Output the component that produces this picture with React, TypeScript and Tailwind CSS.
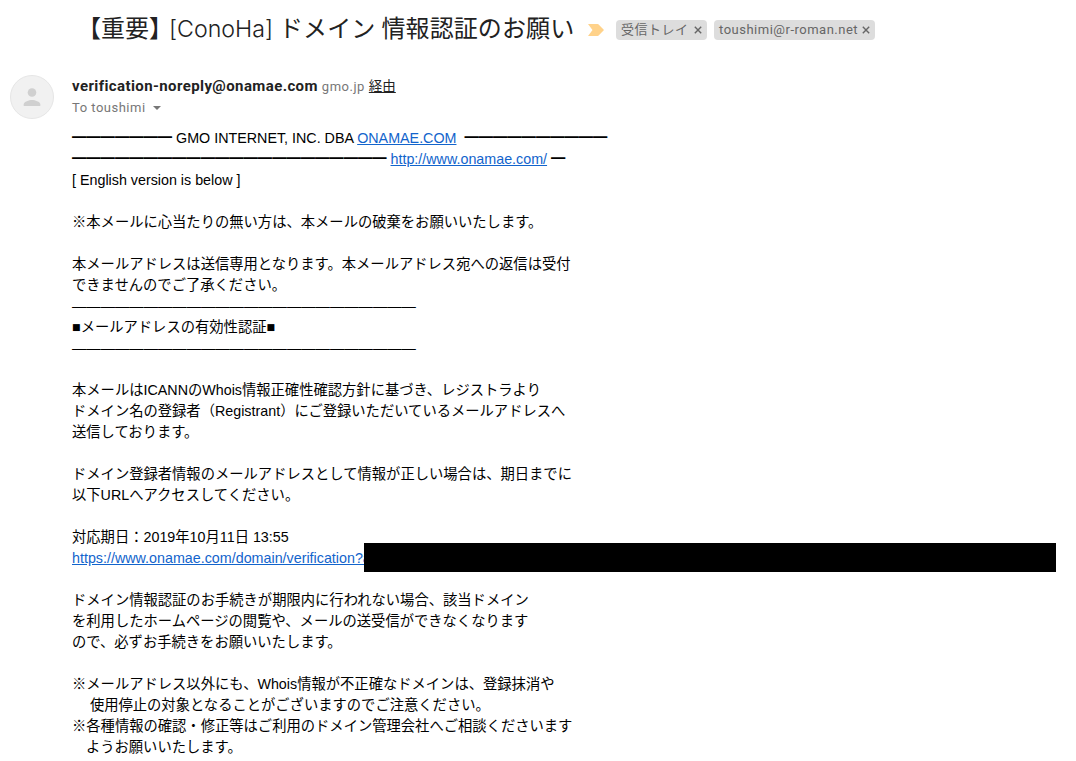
function Chip({ label, w }: { label: string; w: string }) {
  return (
    <span className={`flex h-5 items-center justify-between rounded-[4px] bg-[#dddddd] pl-[5px] pr-[5px] text-[13px] tracking-[0.5px] text-[#666666] ${w}`}>
      <span>{label}</span>
      <svg width="8" height="8" viewBox="0 0 8 8" fill="none" stroke="#666666" strokeWidth="1.4">
        <path d="M.8.8l6.400 6.400M7.200.8L.8 7.200" />
      </svg>
    </span>
  );
}

function Line({ children }: { children?: React.ReactNode }) {
  return <div className="h-[21px] whitespace-pre">{children ?? " "}</div>;
}

function A({ children }: { children: React.ReactNode }) {
  return <a className="text-[#1264cc] underline">{children}</a>;
}

export default function App() {
  return (
    <div className="h-[761px] w-[1076px] overflow-hidden bg-white font-['Roboto','Noto_Sans_CJK_JP',sans-serif]">
      <div className="flex h-[58px] items-center pl-[77px]">
        <h2 className="w-[497px] whitespace-nowrap text-2xl font-normal text-[#222222]">
          【重要】<span className="ml-[-4px] font-['Inter',sans-serif] text-[23.2px] font-light">[ConoHa]</span> <span className="tracking-[0.1px]">ドメイン 情報認証のお願い</span>
        </h2>
        <svg className="ml-[13px] mt-[2px]" width="18" height="14" viewBox="0 0 18 14">
          <path d="M1 1h9.500q1 0 1.600.9L17 7l-4.900 5.100q-.6.900-1.600.900H1l4.500-6z" fill="#ffd28a" />
        </svg>
        <div className="ml-[11px] mt-[2px] flex gap-[7px]">
          <Chip label="受信トレイ" w="w-[91px]" />
          <Chip label="toushimi@r-roman.net" w="w-[161px]" />
        </div>
      </div>
      <div className="flex pl-[10px] pt-[17px]">
        <div className="flex h-[44px] w-[44px] items-center justify-center rounded-full border border-[#e6e6e6] bg-[#f1f1f1]">
          <svg width="20" height="20" viewBox="0 0 20 20" fill="#d0d0d0">
            <circle cx="10" cy="5.500" r="4.300" />
            <path d="M1.700 19v-1.500c0-2.800 5.500-4.500 8.300-4.500s8.300 1.700 8.300 4.500V19z" />
          </svg>
        </div>
        <div className="ml-[18px]">
          <div className="flex h-5 items-baseline">
            <span className="text-[15px] font-bold tracking-[0.4px] text-[#222222]">verification-noreply@onamae.com</span>
            <span className="ml-1 text-[13px] tracking-[0.5px] text-[#777777]">gmo.jp</span>
            <span className="ml-1 text-[13.5px] text-[#222222] underline">経由</span>
          </div>
          <div className="mt-[3px] flex h-5 items-center text-[13px] tracking-[0.5px] text-[#777777]">
            <span>To toushimi</span>
            <span className="ml-[7px] h-0 w-0 border-x-4 border-t-4 border-x-transparent border-t-[#777777]" />
          </div>
          <div className="mt-[10px] text-[14.3px] leading-[21px] text-black font-['Liberation_Sans','Noto_Sans_CJK_JP',sans-serif]">
            <Line>━━━━━━━ GMO INTERNET, INC. DBA <A>ONAMAE.COM</A>  ━━━━━━━━━━</Line>
            <Line>━━━━━━━━━━━━━━━━━━━━━━ <A>http://www.onamae.com/</A> ━</Line>
            <Line>[ English version is below ]</Line>
            <Line />
            <Line>※本メールに心当たりの無い方は、本メールの破棄をお願いいたします。</Line>
            <Line />
            <Line>本メールアドレスは送信専用となります。本メールアドレス宛への返信は受付</Line>
            <Line>できませんのでご了承ください。</Line>
            <div className="h-[21px] whitespace-pre text-[14.34px]">――――――――――――――――――――――――</div>
            <Line>■メールアドレスの有効性認証■</Line>
            <div className="h-[21px] whitespace-pre text-[14.34px]">――――――――――――――――――――――――</div>
            <Line />
            <Line>本メールはICANNのWhois情報正確性確認方針に基づき、レジストラより</Line>
            <Line>ドメイン名の登録者（Registrant）にご登録いただいているメールアドレスへ</Line>
            <Line>送信しております。</Line>
            <Line />
            <Line>ドメイン登録者情報のメールアドレスとして情報が正しい場合は、期日までに</Line>
            <Line>以下URLへアクセスしてください。</Line>
            <Line />
            <Line>対応期日：2019年10月11日 13:55</Line>
            <div className="relative h-[21px] whitespace-pre">
              <A>https://www.onamae.com/domain/verification?a</A>
              <div className="absolute left-[292px] top-[-5px] h-[29px] w-[692px] bg-black" />
            </div>
            <Line />
            <Line>ドメイン情報認証のお手続きが期限内に行われない場合、該当ドメイン</Line>
            <Line>を利用したホームページの閲覧や、メールの送受信ができなくなります</Line>
            <Line>ので、必ずお手続きをお願いいたします。</Line>
            <Line />
            <Line>※メールアドレス以外にも、Whois情報が不正確なドメインは、登録抹消や</Line>
            <div className="h-[21px] whitespace-pre pl-[2px]">    使用停止の対象となることがございますのでご注意ください。</div>
            <Line>※各種情報の確認・修正等はご利用のドメイン管理会社へご相談くださいます</Line>
            <div className="h-[21px] whitespace-pre pl-[2px]">   ようお願いいたします。</div>
          </div>
        </div>
      </div>
    </div>
  );
}
